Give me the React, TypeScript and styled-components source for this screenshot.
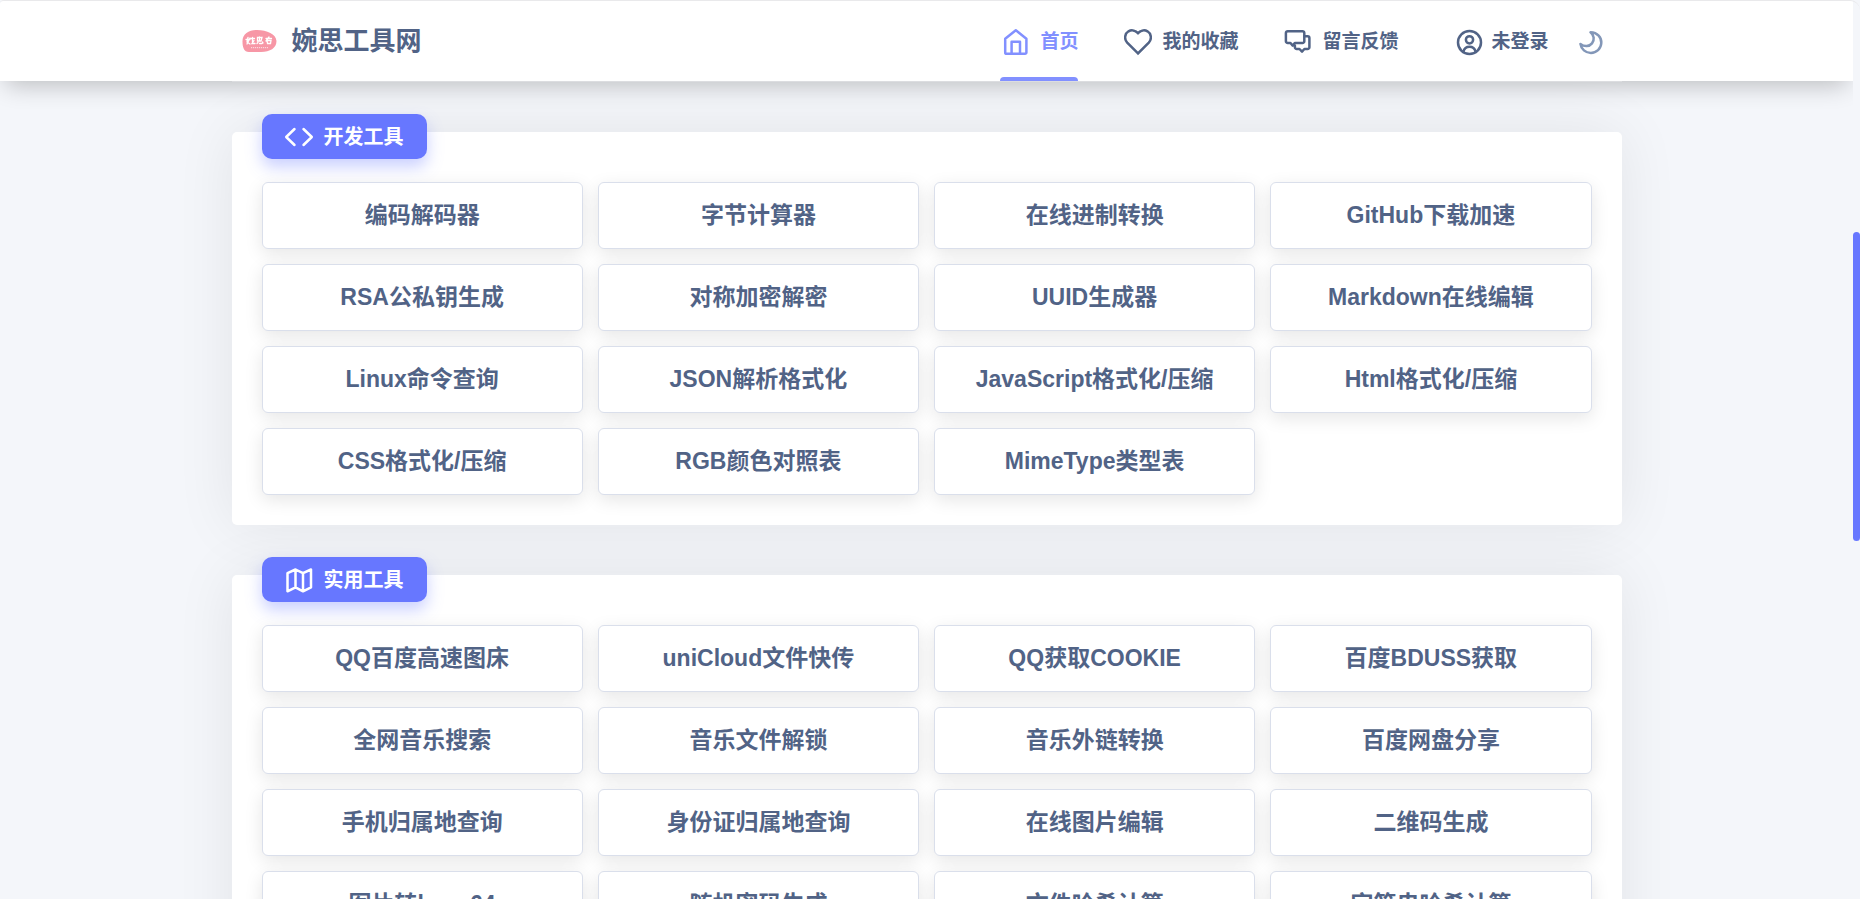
import React from "react";
import styled, { createGlobalStyle } from "styled-components";

const ink = "#516386";
const accent = "#6777ff";

const GlobalStyle = createGlobalStyle`
  * { box-sizing: border-box; }
  body {
    margin: 0;
    background: #f4f6fa;
    color: ${ink};
    font-family: "Liberation Sans", "Noto Sans CJK SC", sans-serif;
  }
`;

const Shell = styled.div`
  display: flex;
  height: 100vh;
  overflow: hidden;
  border-top: 1px solid #e9e9eb;
  border-radius: 4px 10px 0 0;
`;

const Page = styled.div`
  flex: 1;
  min-width: 0;
  display: flex;
  flex-direction: column;
  overflow: hidden;
`;

const Header = styled.header`
  flex: none;
  position: relative;
  z-index: 2;
  height: 80px;
  background: #fff;
  box-shadow: 0 10px 24px -6px rgba(0, 0, 0, 0.24);
`;

const HeaderInner = styled.div`
  display: flex;
  align-items: center;
  justify-content: space-between;
  height: 100%;
  max-width: 1390px;
  margin: 0 auto;
  padding: 0 19px 0 10px;
  box-shadow: 0 1px #dcdde0;
`;

const Brand = styled.a`
  display: flex;
  align-items: center;
  gap: 15px;
  color: inherit;
  text-decoration: none;
  font-size: 26px;
  font-weight: 700;
  line-height: 40px;
`;

const Actions = styled.div`
  display: flex;
  align-items: center;
  height: 100%;
`;

const Nav = styled.nav`
  display: flex;
  gap: 44px;
  height: 100%;
  margin-right: 58px;
`;

const NavLink = styled.a<{ $active?: boolean }>`
  position: relative;
  display: flex;
  align-items: center;
  gap: 10px;
  padding: 2px 0 0 2px;
  color: ${(p) => (p.$active ? "#8290ff" : "inherit")};
  text-decoration: none;
  font-size: 19px;
  font-weight: 700;
  line-height: 28px;

  &::after {
    content: "";
    display: ${(p) => (p.$active ? "block" : "none")};
    position: absolute;
    inset: auto 0 0 0;
    height: 4px;
    border-radius: 4px 4px 0 0;
    background: #8290ff;
  }
`;

const PlainButton = styled.button`
  display: flex;
  align-items: center;
  gap: 8px;
  padding: 2px 0 0;
  border: 0;
  background: none;
  color: inherit;
  font: inherit;
  font-size: 19px;
  font-weight: 700;
  line-height: 28px;
  cursor: pointer;
`;

const ThemeButton = styled(PlainButton)`
  margin-left: 29px;
  color: #8397b8;
`;

const Main = styled.main`
  flex: 1;
  min-height: 0;
  overflow-y: auto;
  scrollbar-width: none;
  padding-top: 51px;
`;

const Panel = styled.section`
  max-width: 1390px;
  margin: 0 auto 50px;
  padding: 0 30px 30px;
  border-radius: 5px;
  background: #fff;
  box-shadow: 0 0 60px rgba(0, 0, 0, 0.08);
`;

const PanelTitle = styled.h2`
  position: relative;
  top: -18px;
  display: flex;
  align-items: center;
  gap: 10px;
  width: fit-content;
  height: 45px;
  margin: 0 0 5px;
  padding: 0 23px 0 22px;
  border-radius: 10px;
  background: ${accent};
  box-shadow: 0 8px 16px rgba(103, 119, 255, 0.35);
  color: #fff;
  font-size: 20px;
  font-weight: 700;
  line-height: 30px;
`;

const ToolGrid = styled.div`
  display: grid;
  grid-template-columns: repeat(4, 1fr);
  gap: 15px;
`;

const ToolCard = styled.a`
  display: flex;
  align-items: center;
  justify-content: center;
  height: 67px;
  padding-bottom: 2px;
  border: 1px solid #dadfeb;
  border-radius: 6px;
  background: #fff;
  box-shadow: 0 5px 18px rgba(0, 0, 0, 0.1);
  color: inherit;
  text-decoration: none;
  font-size: 23px;
  font-weight: 700;
  line-height: 34px;
`;

const ScrollRail = styled.div`
  flex: none;
  display: flex;
  flex-direction: column;
  width: 7px;
`;

const RailSpace = styled.div<{ $share: number }>`
  flex: ${(p) => p.$share};
`;

const RailThumb = styled(RailSpace)`
  border-radius: 4px;
  background: ${accent};
`;

const Icon = styled.svg`
  flex: none;
  display: block;
  fill: none;
  stroke: currentColor;
  stroke-width: 2.5;
  stroke-linecap: round;
  stroke-linejoin: round;
`;

const Logo = () => (
  <svg width="35" height="22" viewBox="0 0 35 22" aria-hidden="true">
    <path d="M.5 12C0 4 7 0 15 0c10 0 19 4 19.500 11C34.500 18 28 22 19 22H7C2 22 .500 17 .500 12Z" fill="#f797a6" />
    <g stroke="#fff" strokeWidth="1.300" strokeLinecap="round" fill="none">
      <path d="M6 7.500 5 12l3 2M4 9.500h4M8 8l-3 6M9 8.500h3.500M10.500 7.500v5M12 10.500l-2 3h3" />
      <path d="M15.500 7.500h4.500l-1 3.500h-3.500zM17.500 7v4M15 13.500l1-1M17.500 13.500h2.500M20.500 12l.500 1" />
      <path d="M24 8.500h5.500M27 7l-3 4M25 10.500h4l-.500 3h-3z" />
    </g>
    <path d="M9 17.700h17" stroke="#fff" strokeWidth="1" strokeDasharray="1.200 .8" opacity=".75" />
  </svg>
);

const HomeIcon = () => (
  <Icon width="28" height="28" viewBox="0 0 28 28" aria-hidden="true">
    <path d="M3.200 10.700 13.800 2.200l10.600 8.500v13.700a1.400 1.400 0 0 1-1.400 1.400H4.600a1.400 1.400 0 0 1-1.400-1.400ZM9.600 25.500V13.800H18v11.700" />
  </Icon>
);

const HeartIcon = () => (
  <Icon width="28" height="28" viewBox="0 0 28 28" aria-hidden="true">
    <path d="M14 25.400 3.200 14.600C-.1 11.100.7 5.600 4.500 3.300 8 1.300 11.800 2.800 14 5.200c2.200-2.400 6-3.900 9.500-1.900 3.800 2.300 4.600 7.800 1.300 11.300Z" strokeLinejoin="miter" />
  </Icon>
);

const ChatIcon = () => (
  <Icon width="28" height="28" viewBox="0 0 28 28" aria-hidden="true">
    <path d="M3.700 3.200h14.800a1.800 1.800 0 0 1 1.800 1.800v8.200a1.800 1.800 0 0 1-1.800 1.800h-7.700L8.700 17.600 6.500 15H3.700a1.800 1.800 0 0 1-1.800-1.800V5a1.800 1.800 0 0 1 1.800-1.800Z" />
    <path d="M20.500 8.200h3.100A1.800 1.800 0 0 1 25.400 10v9.200a1.800 1.800 0 0 1-1.800 1.800h-3.200L18 23.600 15.500 21h-2.800a1.800 1.800 0 0 1-1.800-1.800v-1.600" />
  </Icon>
);

const UserIcon = () => (
  <Icon width="27" height="27" viewBox="0 0 27 27" aria-hidden="true">
    <circle cx="13.500" cy="13.500" r="11.500" />
    <circle cx="13.500" cy="10.800" r="3.600" />
    <path d="M7.400 22.800c.8-3.200 3.200-5 6.100-5s5.300 1.800 6.100 5" />
  </Icon>
);

const MoonIcon = () => (
  <Icon width="25" height="25" viewBox="0 0 25 25" aria-hidden="true">
    <path d="M12.500 2.200c7 .2 11.100 5.300 10.800 10.800-.3 5.800-4.900 9.900-10.400 9.900-5.400 0-9.700-3.700-10.500-9 4 3.200 8.900 2.800 11.600-.5 2.700-3.400 2.200-8.300-1.500-11.200Z" />
  </Icon>
);

const CodeIcon = () => (
  <Icon width="30" height="26" viewBox="0 0 30 26" aria-hidden="true">
    <path d="M10.500 5 2.200 13l8.300 8M19.500 5l8.300 8-8.300 8" />
  </Icon>
);

const MapIcon = () => (
  <Icon width="30" height="26" viewBox="0 0 30 26" aria-hidden="true">
    <path d="M3.500 6.200 11.500 2.500l7.500 3.700 8-3.700v17.800l-8 4-7.500-4-8 4ZM11.500 2.500v17.800M19 6.200v18.100" />
  </Icon>
);

const sections = [
  {
    title: "开发工具",
    icon: <CodeIcon />,
    tools: [
      "编码解码器", "字节计算器", "在线进制转换", "GitHub下载加速",
      "RSA公私钥生成", "对称加密解密", "UUID生成器", "Markdown在线编辑",
      "Linux命令查询", "JSON解析格式化", "JavaScript格式化/压缩", "Html格式化/压缩",
      "CSS格式化/压缩", "RGB颜色对照表", "MimeType类型表",
    ],
  },
  {
    title: "实用工具",
    icon: <MapIcon />,
    tools: [
      "QQ百度高速图床", "uniCloud文件快传", "QQ获取COOKIE", "百度BDUSS获取",
      "全网音乐搜索", "音乐文件解锁", "音乐外链转换", "百度网盘分享",
      "手机归属地查询", "身份证归属地查询", "在线图片编辑", "二维码生成",
      "图片转base64", "随机密码生成", "文件哈希计算", "字符串哈希计算",
    ],
  },
];

export default function App() {
  return (
    <>
      <GlobalStyle />
      <Shell>
        <Page>
          <Header>
            <HeaderInner>
              <Brand href="#">
                <Logo />
                婉思工具网
              </Brand>
              <Actions>
                <Nav>
                  <NavLink href="#" $active>
                    <HomeIcon />
                    首页
                  </NavLink>
                  <NavLink href="#favorites">
                    <HeartIcon />
                    我的收藏
                  </NavLink>
                  <NavLink href="#feedback">
                    <ChatIcon />
                    留言反馈
                  </NavLink>
                </Nav>
                <PlainButton type="button">
                  <UserIcon />
                  未登录
                </PlainButton>
                <ThemeButton type="button" aria-label="切换主题">
                  <MoonIcon />
                </ThemeButton>
              </Actions>
            </HeaderInner>
          </Header>
          <Main>
            {sections.map((section) => (
              <Panel key={section.title}>
                <PanelTitle>
                  {section.icon}
                  {section.title}
                </PanelTitle>
                <ToolGrid>
                  {section.tools.map((tool) => (
                    <ToolCard key={tool} href="#">
                      {tool}
                    </ToolCard>
                  ))}
                </ToolGrid>
              </Panel>
            ))}
          </Main>
        </Page>
        <ScrollRail aria-hidden="true">
          <RailSpace $share={231} />
          <RailThumb $share={309} />
          <RailSpace $share={358} />
        </ScrollRail>
      </Shell>
    </>
  );
}
